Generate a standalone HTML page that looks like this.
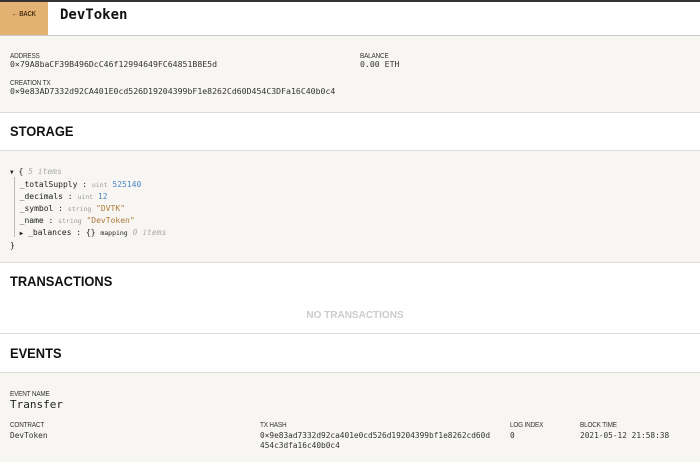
<html><head><style>
body{margin:0;width:700px;height:462px;overflow:hidden;background:#f7f6f2;font-family:"Liberation Sans",sans-serif;color:#222}
.mono{font-family:"DejaVu Sans Mono","Liberation Mono",monospace}
.a{position:absolute}
.lbl{font-size:7.5px;color:#333;font-family:"Liberation Sans",sans-serif;transform:scaleX(.85);transform-origin:left;letter-spacing:-.2px}
.val{font-size:8.2px;color:#333}
.ev{font-size:7.8px;color:#333}
.sec{position:absolute;left:0;width:700px;background:#fff;border-top:1px solid #dedcd6;border-bottom:1px solid #dedcd6}
.sec b{position:absolute;left:10px;font-size:14px;font-weight:bold;color:#111;transform:scaleX(.92);transform-origin:left}
.t{font-size:8px;line-height:12px;white-space:pre}
.g{color:#aaa;font-style:italic}.bl{color:#4a86c8}.br{color:#b07a3a}.tg{color:#999;font-size:6.5px}
</style></head><body>
<div class="a" style="top:0;left:0;width:700px;height:2px;background:#333"></div>
<div class="a" style="top:2px;left:0;width:700px;height:33px;background:#fff;border-bottom:1px solid #ccc"></div>
<div class="a" style="top:2px;left:0;width:48px;height:33px;background:#e3b272"></div>
<div class="a lbl" style="top:11px;left:12px;font-size:7px;color:#4a3218;font-weight:bold">← BACK</div>
<div class="a mono" style="top:7px;left:60px;font-size:14px;font-weight:bold;color:#111">DevToken</div>
<div class="a lbl" style="top:51px;left:10px">ADDRESS</div>
<div class="a mono val" style="top:59px;left:10px">0×79A8baCF39B496DcC46f12994649FC64851B8E5d</div>
<div class="a lbl" style="top:51px;left:360px">BALANCE</div>
<div class="a mono val" style="top:59px;left:360px">0.00 ETH</div>
<div class="a lbl" style="top:78px;left:10px">CREATION TX</div>
<div class="a mono val" style="top:86px;left:10px">0×9e83AD7332d92CA401E0cd526D19204399bF1e8262Cd60D454C3DFa16C40b0c4</div>
<div class="sec" style="top:112px;height:37px"><b style="top:10px">STORAGE</b></div>
<div class="a" style="top:177px;left:14px;width:1px;height:60px;background:#bbb"></div>
<div class="a mono t" style="top:166px;left:10px"><span style="font-size:6px">▼</span> { <span class="g">5 items</span>
  _totalSupply : <span class="tg">uint</span> <span class="bl">525140</span>
  _decimals : <span class="tg">uint</span> <span class="bl">12</span>
  _symbol : <span class="tg">string</span> <span class="br">"DVTK"</span>
  _name : <span class="tg">string</span> <span class="br">"DevToken"</span>
  <span style="font-size:6px">▶</span> _balances : {} <span style="font-size:6.5px">mapping</span> <span class="g">0 items</span>
}</div>
<div class="sec" style="top:262px;height:37px"><b style="top:10px">TRANSACTIONS</b></div>
<div class="a" style="top:300px;left:0;width:700px;height:33px;background:#fff"></div>
<div class="a" style="top:310px;left:0;width:710px;text-align:center;font-size:10px;font-weight:bold;color:#ccc">NO TRANSACTIONS</div>
<div class="sec" style="top:333px;height:38px"><b style="top:11px">EVENTS</b></div>
<div class="a lbl" style="top:389px;left:10px">EVENT NAME</div>
<div class="a mono" style="top:398px;left:10px;font-size:11px;color:#222">Transfer</div>
<div class="a lbl" style="top:420px;left:10px">CONTRACT</div>
<div class="a mono ev" style="top:431px;left:10px">DevToken</div>
<div class="a lbl" style="top:420px;left:260px">TX HASH</div>
<div class="a mono ev" style="top:431px;left:260px;line-height:10px">0×9e83ad7332d92ca401e0cd526d19204399bf1e8262cd60d<br>454c3dfa16c40b0c4</div>
<div class="a lbl" style="top:420px;left:510px">LOG INDEX</div>
<div class="a mono ev" style="top:431px;left:510px">0</div>
<div class="a lbl" style="top:420px;left:580px">BLOCK TIME</div>
<div class="a mono ev" style="top:431px;left:580px">2021-05-12 21:58:38</div>
</body></html>
